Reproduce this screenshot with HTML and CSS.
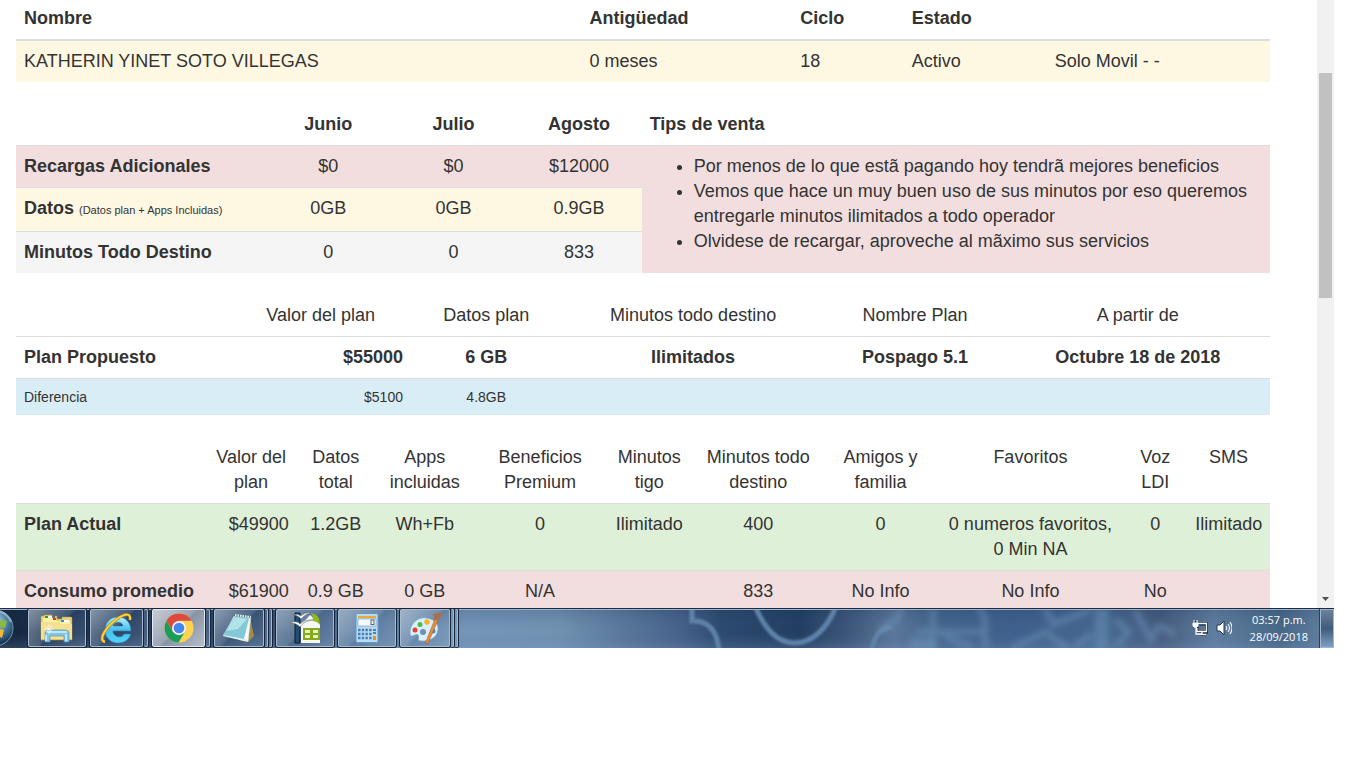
FILE: index.html
```html
<!DOCTYPE html>
<html lang="es">
<head>
<meta charset="utf-8">
<title>Plan Propuesto</title>
<link rel="stylesheet" href="styles.css">
</head>
<body>
<div class="desktop">
  <div class="browser">
    <main class="page">
      <table class="table client">
        <colgroup><col class="c-name"><col class="c-age"><col class="c-cycle"><col class="c-state"><col></colgroup>
        <thead><tr><th>Nombre</th><th>Antigüedad</th><th>Ciclo</th><th>Estado</th><th></th></tr></thead>
        <tbody><tr class="warning"><td>KATHERIN YINET SOTO VILLEGAS</td><td>0 meses</td><td>18</td><td>Activo</td><td>Solo Movil - -</td></tr></tbody>
      </table>

      <table class="table centered usage">
        <colgroup><col class="u-label"><col class="u-month"><col class="u-month"><col class="u-month"><col></colgroup>
        <thead><tr><th></th><th>Junio</th><th>Julio</th><th>Agosto</th><th class="left">Tips de venta</th></tr></thead>
        <tbody>
          <tr class="danger"><th>Recargas Adicionales</th><td>$0</td><td>$0</td><td>$12000</td>
            <td class="tips" rowspan="3">
              <ul>
                <li>Por menos de lo que estã pagando hoy tendrã mejores beneficios</li>
                <li>Vemos que hace un muy buen uso de sus minutos por eso queremos entregarle minutos ilimitados a todo operador</li>
                <li>Olvidese de recargar, aproveche al mãximo sus servicios</li>
              </ul>
            </td></tr>
          <tr class="warning"><th>Datos <small>(Datos plan + Apps Incluidas)</small></th><td>0GB</td><td>0GB</td><td>0.9GB</td></tr>
          <tr class="active"><th>Minutos Todo Destino</th><td>0</td><td>0</td><td>833</td></tr>
        </tbody>
      </table>

      <table class="table centered light-head proposal">
        <colgroup><col class="p-label"><col class="p-value"><col class="p-data"><col class="p-min"><col class="p-name"><col></colgroup>
        <thead><tr><th></th><th>Valor del plan</th><th>Datos plan</th><th>Minutos todo destino</th><th>Nombre Plan</th><th>A partir de</th></tr></thead>
        <tbody>
          <tr class="strong"><th>Plan Propuesto</th><td class="right">$55000</td><td>6 GB</td><td>Ilimitados</td><td>Pospago 5.1</td><td>Octubre 18 de 2018</td></tr>
          <tr class="info"><th>Diferencia</th><td class="right">$5100</td><td>4.8GB</td><td></td><td></td><td></td></tr>
        </tbody>
      </table>

      <table class="table centered light-head current">
        <colgroup><col class="a-label"><col class="a-value"><col class="a-data"><col class="a-apps"><col class="a-prem"><col class="a-tigo"><col class="a-all"><col class="a-friends"><col class="a-fav"><col class="a-ldi"><col></colgroup>
        <thead><tr><th></th><th>Valor del plan</th><th>Datos total</th><th>Apps incluidas</th><th>Beneficios Premium</th><th>Minutos tigo</th><th>Minutos todo destino</th><th>Amigos y familia</th><th>Favoritos</th><th>Voz LDI</th><th>SMS</th></tr></thead>
        <tbody>
          <tr class="success"><th>Plan Actual</th><td class="right">$49900</td><td>1.2GB</td><td>Wh+Fb</td><td>0</td><td>Ilimitado</td><td>400</td><td>0</td><td>0 numeros favoritos, 0 Min NA</td><td>0</td><td>Ilimitado</td></tr>
          <tr class="danger"><th>Consumo promedio</th><td class="right">$61900</td><td>0.9 GB</td><td>0 GB</td><td>N/A</td><td></td><td>833</td><td>No Info</td><td>No Info</td><td>No</td><td></td></tr>
        </tbody>
      </table>
    </main>
    <div class="scrollbar">
      <div class="thumb"></div>
      <svg class="arrow" viewBox="0 0 17 17" aria-hidden="true"><path d="M5 6h7L8.500 10z" fill="#505050"/></svg>
    </div>
  </div>

  <footer class="taskbar">
    <svg class="wallpaper" viewBox="0 0 1334 40" preserveAspectRatio="none" aria-hidden="true">
      <defs>
        <linearGradient id="sky">
          <stop offset="0" stop-color="#14243c"/><stop offset=".06" stop-color="#1a3050"/><stop offset=".19" stop-color="#304a6c"/><stop offset=".27" stop-color="#58789d"/><stop offset=".35" stop-color="#7596b7"/><stop offset=".42" stop-color="#7292b2"/><stop offset=".47" stop-color="#587799"/><stop offset=".51" stop-color="#47618a"/><stop offset=".54" stop-color="#2c4a6e"/><stop offset=".6" stop-color="#213e60"/><stop offset=".635" stop-color="#3c5578"/><stop offset=".67" stop-color="#5b7798"/><stop offset=".7" stop-color="#44658c"/><stop offset=".76" stop-color="#3e608c"/><stop offset=".83" stop-color="#46688f"/><stop offset=".87" stop-color="#465b7e"/><stop offset=".91" stop-color="#607f9f"/><stop offset=".96" stop-color="#486889"/><stop offset="1" stop-color="#6885a3"/>
        </linearGradient>
        <linearGradient id="glow" x2="0" y2="1"><stop offset="0" stop-color="#102a4c" stop-opacity=".2"/><stop offset=".6" stop-color="#416492" stop-opacity="0"/><stop offset="1" stop-color="#7899bd" stop-opacity=".25"/></linearGradient>
        <filter id="soft" x="-5%" y="-50%" width="110%" height="200%"><feGaussianBlur stdDeviation="1.300"/></filter>
        <filter id="softer" x="-5%" y="-50%" width="110%" height="200%"><feGaussianBlur stdDeviation="3"/></filter>
      </defs>
      <path fill="url(#sky)" d="M0 0h1334v40H0z"/>
      <path fill="url(#glow)" d="M0 0h1334v40H0z"/>
      <g fill="none" stroke="#5f82a8" stroke-width="5" filter="url(#soft)">
        <path d="M692-2v15c16-1 26 10 27 31M755-2c10 24 24 37 40 37s32-13 41-37M872 44c1-16 9-24 20-25"/>
      </g>
      <g fill="none" stroke="#7297bd" stroke-opacity=".5" stroke-width="6" filter="url(#softer)">
        <path d="M880 25c4-12 18-5 21-25M933 0v42M940 24q18 12 32 14M916 24h66M978 0q8 6 7 20v20M1012 40l34-16 24 18M1045 0l8 16 38-14M1076 38l16-12M1098 42V0M1105 42V0M1115 12l14 12-14 14M1135 2l16 30 8-14 16 8"/>
        <path stroke-width="14" d="M910 37h26"/>
      </g>
      <path fill="#1e2b43" d="M0 0h1334v1H0z"/><path fill="#9db4cc" d="M0 1h1334v1H0z"/>
    </svg>

    <button class="start" aria-label="Inicio">
      <svg viewBox="0 0 14 40" aria-hidden="true">
        <defs><radialGradient id="orb" gradientUnits="userSpaceOnUse" cx="-4" cy="14" r="22"><stop offset="0" stop-color="#b9d8e9"/><stop offset=".6" stop-color="#3e7298"/><stop offset="1" stop-color="#17334f"/></radialGradient></defs>
        <circle cx="-5" cy="20" r="18" fill="url(#orb)" stroke="#7395b0"/>
        <path d="M-1 13c3-1 5-1 8 0l-2 7c-2-1-4-1-6 0z" fill="#8cbb42"/><path d="M-1 22c2-1 3-1 5 0l-2 8-4-2z" fill="#f5b632"/>
        <path d="M0 4c5 1 9 5 11 10" fill="none" stroke="#b9d4e5" stroke-width="2" opacity=".6"/>
      </svg>
    </button>

    <nav class="apps">
      <button class="app" aria-label="Explorador"><span class="face">
        <svg viewBox="0 0 34 32" aria-hidden="true"><path d="M1 8V5q0-1 1-1h2V3h8v3h3V4h2v3h5V5h9q1 0 1 1v22H1z" fill="#e7d27a" stroke="#b9964d" stroke-width=".5"/><path d="M3 6h13v3h14v18H3z" fill="#fff0a9"/><path d="M5 4h3v2H5z" fill="#1aa83a"/><path d="M13 6h3v2h-3z" fill="#d5351c"/><path d="M21 8h3v2h-3z" fill="#1d91e4"/><path d="M24 8h5v2h-5zM8 4h4v2H8z" fill="#fff"/><path d="M1 10h18l2 2h11v15H1z" fill="#f5df91"/><path d="M5 30V21q0-3 4-3h16q4 0 4 3v9h-5v-6H10v6z" fill="#84c5e2" stroke="#4f9ac0" stroke-width=".7"/><path d="M7 20h20M6 23v6M26 22v7" stroke="#d4f5ff" stroke-width="1.500"/><path d="M9 12v10M4 17h10M6 14l6 6M12 14l-6 6" stroke="#fff" stroke-width=".7"/></svg>
      </span></button>
      <button class="app stacked" aria-label="Internet Explorer"><span class="face">
        <svg viewBox="0 0 34 32" aria-hidden="true"><defs><linearGradient id="ie" x2="0" y2="1"><stop offset="0" stop-color="#b9f2ff"/><stop offset=".5" stop-color="#46bfee"/><stop offset="1" stop-color="#55d3fb"/></linearGradient></defs><path fill="url(#ie)" stroke="#277dac" stroke-width=".6" d="M31 19H13c0 6 9 8 11 3h7c-2 6-7 9-13 9C10 31 5 25 5 18S10 5 18 5s13 6 13 14zM13 14h10c-1-5-9-5-10 0z"/><path d="M5 30c-8-2 2-16 12-23 9-6 14-6 13 1" fill="none" stroke="#b27a0c" stroke-width="3"/><path d="M5 30c-8-2 2-16 12-23 9-6 14-6 13 1" fill="none" stroke="#fcd43c" stroke-width="2"/></svg>
      </span><i></i></button>
      <button class="app stacked current-app" aria-label="Chrome"><span class="face">
        <svg viewBox="0 0 34 32" aria-hidden="true"><circle cx="17" cy="16" r="14.500" fill="#fdd351"/><path d="M17 16L4.400 8.800A14.500 14.500 0 0 1 29.600 8.800H17z" fill="#dc4b3e"/><path d="M4.400 8.800l6.400 11L17 16l2-7.200H10z" fill="#dc4b3e"/><path d="M4.400 8.800l6.400 11 6.200 3.200 5.500-2.500-6 10A14.500 14.500 0 0 1 4.400 8.800z" fill="#199d59"/><circle cx="17" cy="16" r="7" fill="#f4f4f4"/><circle cx="17" cy="16" r="5.300" fill="#4286ed"/></svg>
      </span><i></i></button>
      <button class="app stacked double" aria-label="Bloc de notas"><span class="face">
        <svg viewBox="0 0 34 32" aria-hidden="true"><path d="M28 5l4 19-6 6-9-2z" fill="#a88b45"/><path d="M13 2l16 2-3 26L1 24z" fill="#e2f7f9"/><path d="M13 4l14 2-5 21L1 23z" fill="#82c8d6"/><path d="M13 5l12 2-9 10-12 2z" fill="#b1e3e8"/><path d="M22 27l4 3 3-25" fill="#f5fbfb" stroke="#9ab1b3" stroke-width=".4"/><path d="M12 3l17 2" stroke="#5d6b6f" stroke-width="2.500" stroke-dasharray="1 1.500"/></svg>
      </span><i></i><i></i></button>
      <button class="app" aria-label="Hoja de cálculo"><span class="face">
        <svg viewBox="0 0 34 32" aria-hidden="true"><path d="M7 1h5v30H7z" fill="#234d79" stroke="#101a27"/><path d="M13 12q4-3 9-9l10 9v19H13z" fill="#f5f7f4"/><path d="M23 1q9 1 9 12-3-4-8-4 2-4-1-8z" fill="#91b91d"/><path d="M15 16h17v12H15z" fill="#85aa19"/><path d="M17 18h5v3h-5zM25 18h5v3h-5zM17 23h5v3h-5zM25 23h5v3h-5z" fill="#e9f3c5"/><path d="M5 3q5-2 8 1 4-4 10-3-6 1-10 6-3-4-8-4zM2 11q7-3 10 1 5-5 12-4-8 1-12 7-3-4-10-4z" fill="#fff" stroke="#516674" stroke-width=".5"/></svg>
      </span></button>
      <button class="app" aria-label="Calculadora"><span class="face">
        <svg viewBox="0 0 34 32" aria-hidden="true"><rect x="6" y="1.500" width="22" height="29" rx="1.500" fill="#b9dbf2" stroke="#5b9bcb"/><path d="M8 4h18v2H8z" fill="#f5a632"/><path d="M8 7h18v7H8z" fill="#f7fbfd" stroke="#6c9abd" stroke-width=".6"/><rect x="21" y="8" width="3" height="4.500" fill="none" stroke="#54616e"/><path d="M8 18h14M8 22h14M8 26h14" stroke="#4780b5" stroke-width="2.500" stroke-dasharray="2.500 1.200"/><path d="M23 17h3v2h-3zM23 20h3v2h-3z" fill="#4780b5"/><path d="M23 24h3v4h-3z" fill="#f28d18"/></svg>
      </span></button>
      <button class="app stacked double" aria-label="Paint"><span class="face">
        <svg viewBox="0 0 34 32" aria-hidden="true"><path d="M19 6C10 4 1 12 2 22c1 5 5-1 8 1 2 2-2 6 3 6 10 1 18-5 17-14-1-5-5-8-11-9z" fill="#d9effa" stroke="#70a5c8" stroke-width=".8"/><circle cx="15" cy="20" r="3" fill="#6c91b2"/><circle cx="7" cy="18" r="2.500" fill="#e34134"/><circle cx="12" cy="12.500" r="2.500" fill="#4db94d"/><circle cx="19" cy="10" r="2.700" fill="#f5b328"/><circle cx="25" cy="19" r="2.500" fill="#3c91cf"/><path d="M27 7l3 1-10 23-3 1z" fill="#eb8d39" stroke="#b65b20" stroke-width=".6"/><path d="M25 2l9-2c0 4-2 7-5 8l-3-1z" fill="#a8704e"/></svg>
      </span><i></i><i></i></button>
    </nav>

    <div class="tray">
      <svg class="tray-icon" viewBox="0 0 16 16" aria-hidden="true"><g fill="none" stroke="#15243a" stroke-width="3"><path d="M6 4h9v8H5V7M3 1v6M7 15h7"/></g><path d="M6 3.500h8.500v8H5V8M4 7v7h6M7 14.500h7M10 12v2" fill="none" stroke="#fff" stroke-width="1.300"/><path d="M1 3h5v3q-2.500 3-5 0zM2 0v3M5 0v3" fill="#fff" stroke="#fff"/></svg>
      <svg class="tray-icon" viewBox="0 0 16 16" aria-hidden="true"><path d="M1 5h3l4-4v14l-4-4H1z" fill="#fff" stroke="#26384f"/><path d="M10 6q1.500 2 0 4M12 4q3 4 0 8M14 2q4 6 0 12" fill="none" stroke="#e9eff5" stroke-width="1.200"/></svg>
      <div class="clock"><span>03:57 p.m.</span><span>28/09/2018</span></div>
    </div>
    <button class="show-desktop" aria-label="Mostrar escritorio"></button>
  </footer>
</div>
</body>
</html>
```
FILE: styles.css
```css
* { box-sizing: border-box; }

body {
  margin: 0;
  background: #fff;
  color: #333;
  font-family: "Liberation Sans", Arial, sans-serif;
  font-size: 18px;
  line-height: 25px;
}

.desktop { padding-right: 32px; }

.browser {
  display: flex;
  height: calc(100vh - 160px);
  overflow: hidden;
}

.page {
  flex: 1;
  min-width: 0;
  padding: 0 47px 0 16px;
}

/* Tables */
.table {
  width: 100%;
  margin-bottom: 21px;
  table-layout: fixed;
  border-collapse: separate;
  border-spacing: 0;
}

.table th,
.table td {
  padding: 8px;
  vertical-align: top;
  text-align: left;
}

.table tbody th,
.table tbody td { border-top: 1px solid #ddd; }

.table thead th { padding-top: 9px; }

.table.client thead th {
  padding-top: 6px;
  border-bottom: 2px solid #ddd;
}

.table.client tbody td { border-top: 0; }

.table.centered td,
.table.centered thead th { text-align: center; }

.table.centered thead .left { text-align: left; }
.table.centered .right { text-align: right; }
.light-head thead th { font-weight: normal; }
.strong td { font-weight: bold; }

.warning { background: #fef8e3; }
.danger { background: #f2dede; }
.active { background: #f5f5f5; }
.success { background: #dff0d8; }
.info { background: #d9edf7; }

.info th,
.info td {
  font-size: 14px;
  line-height: 20px;
  font-weight: normal;
}

small {
  font-size: 11px;
  font-weight: normal;
}

.table.centered .tips {
  background: #f2dede;
  text-align: left;
}

.tips ul {
  margin: 0 0 11px;
  padding-left: 44px;
}

.c-name { width: 45.1%; }
.c-age { width: 16.8%; }
.c-cycle { width: 8.9%; }
.c-state { width: 11.4%; }

.u-label { width: 19.9%; }
.u-month { width: 10%; }

.p-label { width: 17.1%; }
.p-value { width: 14.4%; }
.p-data { width: 12%; }
.p-min { width: 21%; }
.p-name { width: 14.4%; }

.a-label { width: 15.1%; }
.a-value { width: 7.3%; }
.a-data { width: 6.2%; }
.a-apps { width: 8%; }
.a-prem { width: 10.4%; }
.a-tigo { width: 7%; }
.a-all { width: 10.4%; }
.a-friends { width: 9.1%; }
.a-fav { width: 14.8%; }
.a-ldi { width: 5.1%; }

/* Scrollbar */
.scrollbar {
  display: flex;
  flex-direction: column;
  justify-content: space-between;
  width: 17px;
  padding: 73px 2px 0;
  background: #f1f1f1;
}

.thumb {
  height: 225px;
  background: #c1c1c1;
}

.arrow {
  width: 17px;
  height: 17px;
  margin-left: -2px;
}

/* Taskbar */
.taskbar {
  position: relative;
  display: flex;
  height: 40px;
}

.wallpaper {
  position: absolute;
  inset: 0;
  width: 100%;
  height: 100%;
}

button {
  padding: 0;
  border: 0;
  background: none;
}

.start {
  position: relative;
  width: 14px;
  height: 40px;
}

.start svg {
  display: block;
  width: 14px;
  height: 40px;
}

.apps {
  position: relative;
  display: flex;
  gap: 4px;
  padding: 1px 0 1px 14px;
}

.app {
  display: flex;
  gap: 1px;
  width: 58px;
}

.face,
.app i {
  height: 38px;
  border: 1px solid #a9bacd;
  border-radius: 2px;
  box-shadow: 0 0 0 1px #17243a;
}

.face {
  display: flex;
  flex: 1;
  align-items: center;
  justify-content: center;
  background: linear-gradient(135deg, rgba(220, 230, 240, 0.55), rgba(180, 200, 220, 0.25) 48%, rgba(120, 145, 175, 0.15) 52%, rgba(170, 190, 215, 0.25));
}

.app i {
  width: 4px;
  border-left: 0;
  background: rgba(150, 175, 200, 0.3);
}

.double i { width: 3px; }

.current-app .face {
  border-color: #e3e9ef;
  background: linear-gradient(135deg, #c7ccd4, #9ba5b3 48%, #8793a5 52%, #b5bdc9);
}

.face svg {
  width: 34px;
  height: 32px;
}

.tray {
  position: relative;
  display: flex;
  align-items: center;
  gap: 8px;
  margin-left: auto;
  padding-right: 12px;
}

.tray-icon {
  width: 16px;
  height: 16px;
}

.clock {
  display: flex;
  flex-direction: column;
  margin-left: 10px;
  color: #fff;
  font-family: "Open Sans", "Noto Sans", sans-serif;
  font-size: 11px;
  line-height: 17px;
  text-align: center;
}

.show-desktop {
  position: relative;
  width: 14px;
  height: 39px;
  margin-top: 1px;
  border: 1px solid #a0b6ce;
  background: linear-gradient(#6d8299, #405c7c 50%, #7e9fc4);
  box-shadow: -1px 0 #2c405a;
}
```
